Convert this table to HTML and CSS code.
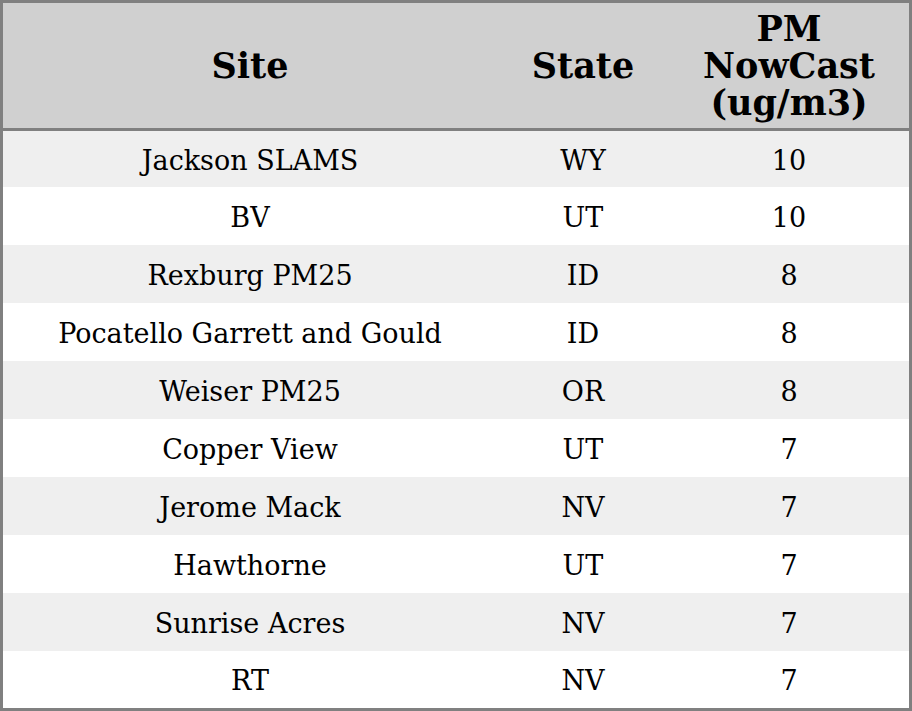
FILE: index.html
```html
<!DOCTYPE html>
<html>
<head>
<meta charset="utf-8">
<link rel="stylesheet" href="styles.css">
</head>
<body>
<table class="tbl">
  <colgroup>
    <col class="c-site">
    <col class="c-state">
    <col class="c-pm">
  </colgroup>
  <thead>
    <tr class="head">
      <th>Site</th>
      <th>State</th>
      <th>PM<br>NowCast<br>(ug/m3)</th>
    </tr>
  </thead>
  <tbody>
    <tr class="odd first"><td>Jackson SLAMS</td><td>WY</td><td>10</td></tr>
    <tr class="even"><td>BV</td><td>UT</td><td>10</td></tr>
    <tr class="odd"><td>Rexburg PM25</td><td>ID</td><td>8</td></tr>
    <tr class="even"><td>Pocatello Garrett and Gould</td><td>ID</td><td>8</td></tr>
    <tr class="odd"><td>Weiser PM25</td><td>OR</td><td>8</td></tr>
    <tr class="even"><td>Copper View</td><td>UT</td><td>7</td></tr>
    <tr class="odd"><td>Jerome Mack</td><td>NV</td><td>7</td></tr>
    <tr class="even"><td>Hawthorne</td><td>UT</td><td>7</td></tr>
    <tr class="odd"><td>Sunrise Acres</td><td>NV</td><td>7</td></tr>
    <tr class="even last"><td>RT</td><td>NV</td><td>7</td></tr>
  </tbody>
</table>
</body>
</html>
```
FILE: styles.css
```css
html, body {
  margin: 0;
  padding: 0;
  background: #ffffff;
}
.tbl {
  width: 912px;
  border-collapse: separate;
  border-spacing: 0;
  border: 3px solid #808080;
  box-sizing: border-box;
  table-layout: fixed;
  font-family: "DejaVu Serif", serif;
  color: #000;
}
.c-site { width: 494px; }
.c-state { width: 172px; }
.c-pm { width: 240px; }
.head th {
  background: #d0d0d0;
  height: 128px;
  box-sizing: border-box;
  padding: 0;
  font-size: 35px;
  font-weight: bold;
  line-height: 37px;
  text-align: center;
  vertical-align: middle;
  border-bottom: 3px solid #808080;
}
td {
  height: 58px;
  box-sizing: border-box;
  padding: 3px 0 0 0;
  font-size: 27px;
  line-height: 32px;
  text-align: center;
  vertical-align: middle;
}
.first td { height: 56px; }
.last td { height: 57px; }
.odd td { background: #efefef; }
.even td { background: #ffffff; }
```
